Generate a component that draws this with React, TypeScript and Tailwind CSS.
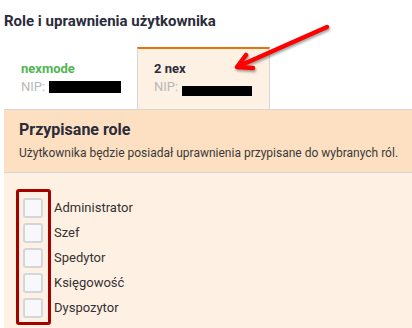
import { useState } from 'react';

const roles = ['Administrator', 'Szef', 'Spedytor', 'Księgowość', 'Dyspozytor'];

export default function App() {
  const [active, setActive] = useState(1);
  const [checked, setChecked] = useState<string[]>([]);

  const toggle = (role: string) =>
    setChecked(c => (c.includes(role) ? c.filter(r => r !== role) : [...c, role]));

  return (
    <div className="relative w-[412px] h-[328px] overflow-hidden bg-white font-['Roboto',sans-serif]">
      <h2 className="pl-1 pt-[12px] text-[15px] leading-[18px] font-bold text-[#2b2b3b]">Role i uprawnienia użytkownika</h2>

      <div className="ml-1 mt-[17px] flex">
        <div
          onClick={() => setActive(0)}
          className={`w-[133px] h-[62px] pl-[17px] pt-[11px] text-[13px] leading-[18px] cursor-pointer border-t-2 ${active === 0 ? 'border-[#e8730c] bg-[#fdf1e4] border-x border-x-[#d6d6d6]' : 'border-transparent'}`}
        >
          <div className="font-bold text-[#52b552]">nexmode</div>
          <div className="flex items-start text-[#b8b8b8]">
            NIP:
            <span className="ml-[4px] mt-[3px] w-[72px] h-[12px] bg-black" />
          </div>
        </div>
        <div
          onClick={() => setActive(1)}
          className={`w-[133px] h-[62px] pl-[16px] pt-[11px] text-[13px] leading-[18px] cursor-pointer border-t-2 ${active === 1 ? 'border-[#e8730c] bg-[#fdf1e4] border-x border-x-[#d6d6d6]' : 'border-transparent'}`}
        >
          <div className="font-bold text-[#2b2b3b]">2 nex</div>
          <div className="flex items-start text-[#b8b8b8]">
            NIP:
            <span className="ml-[4px] mt-[8px] w-[70px] h-[10px] bg-black" />
          </div>
        </div>
      </div>

      <div className="ml-1 border-y border-[#d6d6d6] bg-[#fde0c1] pl-[15px] pt-[10px] pb-[11px]">
        <h3 className="text-[16px] leading-[20px] font-bold text-[#2b2b3b]">Przypisane role</h3>
        <p className="mt-[5px] text-[12px] leading-[16px] text-[#3a3a3a]">
          Użytkownika będzie posiadał uprawnienia przypisane do wybranych ról.
        </p>
      </div>

      <div className="relative ml-1 h-[160px] bg-[#fef0e3] pl-[19px] pt-[25px]">
        <div className="flex flex-col gap-[5px]">
          {roles.map(role => (
            <label key={role} className="flex items-center h-[20px] cursor-pointer">
              <span
                onClick={() => toggle(role)}
                className={`w-[20px] h-[20px] rounded-[3px] border-2 border-[#d3d6dc] ${checked.includes(role) ? 'bg-[#e8730c]' : 'bg-[#f8f8fa]'}`}
              />
              <span className="ml-[11px] text-[13px] leading-[18px] text-[#333]">{role}</span>
            </label>
          ))}
        </div>
        {/* annotation box */}
        <div className="pointer-events-none absolute left-[12px] top-[16px] w-[35px] h-[136px] rounded-[3px] border-[3px] border-[#a30000]" />
      </div>

      {/* annotation arrow */}
      <svg className="pointer-events-none absolute left-0 top-0 drop-shadow-[1px_2px_1px_rgba(0,0,0,0.35)]" width="412" height="120" viewBox="0 0 412 120">
        <g fill="none" stroke="#ff0000" strokeWidth="4.5" strokeLinecap="round" strokeLinejoin="round">
          <path d="M327 27 L239 66" />
          <path d="M246 55 L237 67 L253 68" />
        </g>
      </svg>
    </div>
  );
}
